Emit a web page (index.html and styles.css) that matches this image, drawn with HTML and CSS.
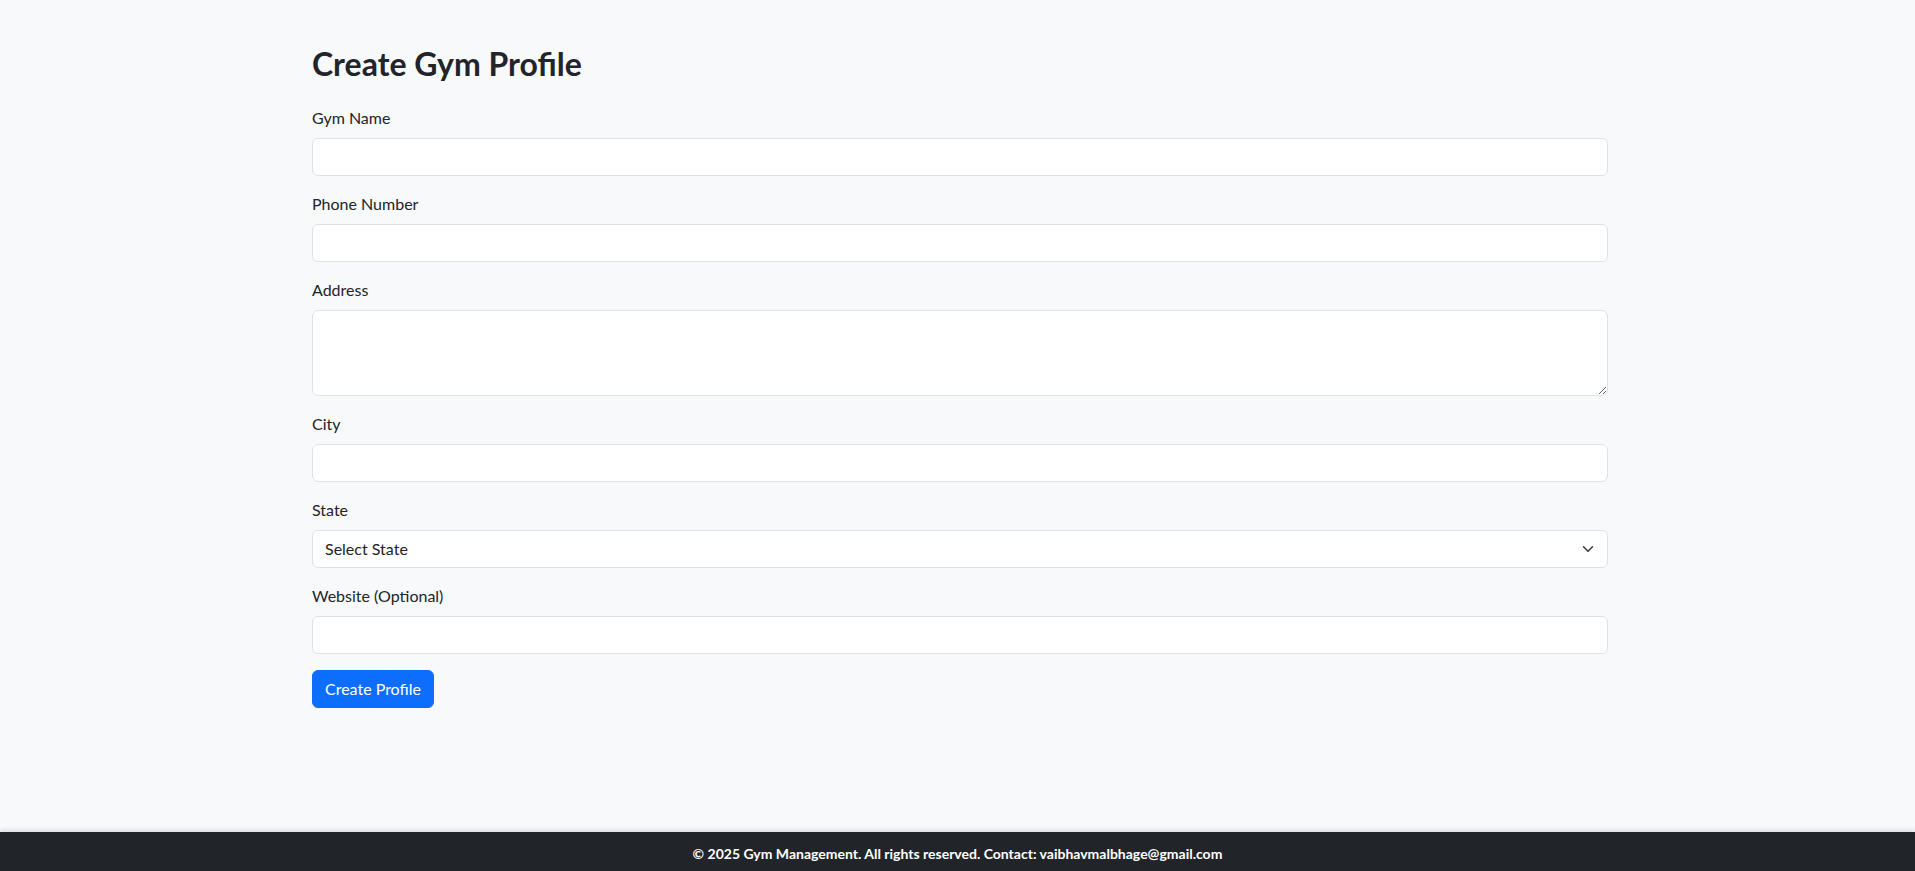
FILE: index.html
```html
<!DOCTYPE html>
<html lang="en">
<head>
<meta charset="utf-8">
<title>Create Gym Profile</title>
<link rel="stylesheet" href="styles.css">
</head>
<body>
<div class="page">
  <main class="container">
    <h2 class="title">Create Gym Profile</h2>
    <form class="form">
      <div class="group">
        <label class="label" for="name">Gym Name</label>
        <input class="control" id="name" type="text">
      </div>
      <div class="group">
        <label class="label" for="phone">Phone Number</label>
        <input class="control" id="phone" type="text">
      </div>
      <div class="group">
        <label class="label" for="address">Address</label>
        <textarea class="control textarea" id="address" rows="3"></textarea>
      </div>
      <div class="group">
        <label class="label" for="city">City</label>
        <input class="control" id="city" type="text">
      </div>
      <div class="group">
        <label class="label" for="state">State</label>
        <div class="select-wrap">
          <select class="control select" id="state">
            <option>Select State</option>
          </select>
          <svg class="chevron" width="16" height="12" viewBox="0 0 16 16" aria-hidden="true"><path fill="none" stroke="#343a40" stroke-linecap="round" stroke-linejoin="round" stroke-width="2" d="m2 5 6 6 6-6"/></svg>
        </div>
      </div>
      <div class="group">
        <label class="label" for="website">Website (Optional)</label>
        <input class="control" id="website" type="text">
      </div>
      <button class="btn" type="button">Create Profile</button>
    </form>
  </main>
  <footer class="footer">© 2025 Gym Management. All rights reserved. Contact: vaibhavmalbhage@gmail.com</footer>
</div>
</body>
</html>
```
FILE: styles.css
```css
* { box-sizing: border-box; }

body {
  margin: 0;
  background: #f8f9fa;
  color: #212529;
  font-family: "Lato", "Roboto", sans-serif;
  font-size: 16px;
  line-height: 1.5;
}

.page {
  min-height: 100vh;
  display: flex;
  flex-direction: column;
}

.container {
  flex: 1;
  width: 1296px;
  margin-left: calc(50% - 645.5px);
  padding-top: 45px;
}

.title {
  margin: 0 0 23px;
  font-size: 32px;
  font-weight: 700;
  line-height: 1.2;
  color: #212529;
}

.group {
  margin-bottom: 16px;
}

.label {
  display: block;
  margin-bottom: 8px;
  line-height: 24px;
}

.control {
  display: block;
  width: 100%;
  height: 38px;
  padding: 6px 12px;
  font-family: inherit;
  font-size: 16px;
  line-height: 1.5;
  color: #212529;
  background: #fff;
  border: 1px solid #dee2e6;
  border-radius: 6px;
  outline: none;
}

.textarea {
  height: 86px;
  resize: vertical;
}

.select-wrap {
  position: relative;
}

.select {
  appearance: none;
  -webkit-appearance: none;
  padding-right: 36px;
}

.chevron {
  position: absolute;
  right: 12px;
  top: 13px;
  pointer-events: none;
}

.btn {
  display: inline-block;
  height: 38px;
  padding: 6px 12px;
  font-family: inherit;
  font-size: 16px;
  line-height: 1.5;
  color: #fff;
  background: #0d6efd;
  border: 1px solid #0d6efd;
  border-radius: 6px;
  cursor: pointer;
}

.footer {
  background: #212529;
  color: #fff;
  text-align: center;
  font-size: 14px;
  font-weight: 700;
  line-height: 21px;
  padding: 11px 0 7px;
  box-shadow: 0 -2px 5px rgba(0, 0, 0, 0.12);
}
```
